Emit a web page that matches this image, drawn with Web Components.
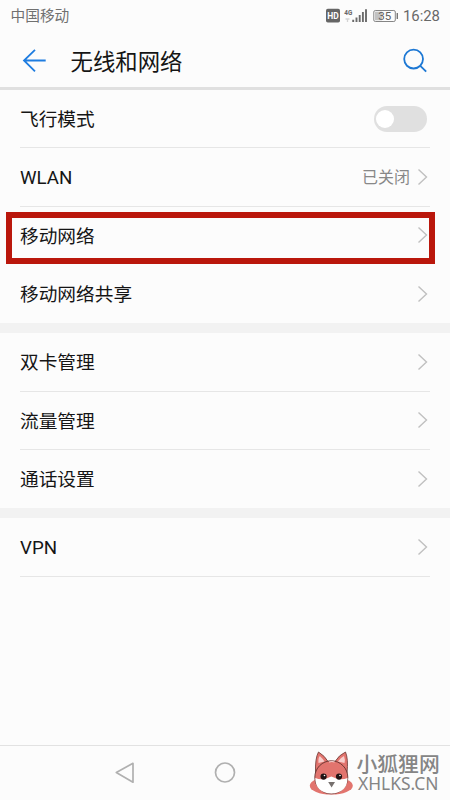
<!DOCTYPE html>
<html lang="zh-CN">
<head>
<meta charset="utf-8">
<title>无线和网络</title>
<style>
html,body{margin:0;height:100%;overflow:hidden}
body{background:#fcfcfc;color:#151515;font-family:Roboto,"Noto Sans CJK SC",sans-serif}
</style>
</head>
<body>
<settings-screen></settings-screen>
<script>
function define(name, html) {
  const t = document.createElement('template');
  t.innerHTML = html;
  customElements.define(name, class extends HTMLElement {
    constructor() {
      super();
      this.attachShadow({mode: 'open'}).append(t.content.cloneNode(true));
    }
  });
}

define('status-bar', `
<style>
:host{display:flex;height:34px;box-sizing:border-box;padding:0 10px 2px 10.5px;align-items:center;color:#707070;font-size:14.7px;line-height:20px}
.carrier{flex:1}
svg{display:block}
.time{margin-left:5px;color:#686868;font-size:14.9px}
</style>
<span class="carrier">中国移动</span>
<svg width="73" height="20" viewBox="325 5 73 20">
  <rect x="326" y="7.8" width="14" height="13.8" rx="1.8" fill="#666"/>
  <text x="327.3" y="18" font-family="Roboto" font-size="9" font-weight="700" fill="#fff" textLength="11.5" lengthAdjust="spacingAndGlyphs">HD</text>
  <text x="344.3" y="13.6" font-family="Roboto" font-size="7.5" font-weight="700" fill="#666" textLength="8" lengthAdjust="spacingAndGlyphs">4G</text>
  <path d="M345.5 18h4M347.5 18v3" stroke="#d4d4d4" stroke-width="1.3"/>
  <path d="M353.2 18.8V21M356.5 16.5V21M359.7 14V21M362.9 11V21M366 8.3V21" stroke="#6b6b6b" stroke-width="1.9"/>
  <rect x="373.8" y="9.5" width="21.5" height="11" rx="1.5" fill="none" stroke="#858585"/>
  <rect x="375" y="10.7" width="7" height="8.6" fill="#c2c2c2"/>
  <path d="M397.3 12v6" stroke="#777" stroke-width="1.4"/>
  <text x="378.2" y="19" font-family="Roboto" font-size="11.5" fill="#606060" textLength="13" lengthAdjust="spacingAndGlyphs">35</text>
</svg>
<span class="time">16:28</span>`);

define('title-bar', `
<style>
:host{display:flex;height:56px;box-sizing:border-box;border-bottom:3px solid #e0e0e0;padding:0 22px 0 22px;align-items:center}
h1{flex:1;margin:0 0 0 23.5px;padding-top:2px;font-size:22.4px;line-height:30px;font-weight:400}
svg{display:block}
</style>
<svg width="25" height="26" viewBox="0 0 25 26" fill="none" stroke="#1f7de0" stroke-width="1.8"><path d="M23.7 12.5H2M13 1.8L2 12.5L13 23.4"/></svg>
<h1><slot></slot></h1>
<svg width="26" height="26" viewBox="0 0 26 26" fill="none" stroke="#1d78d4" stroke-width="1.8"><circle cx="11.6" cy="11.1" r="9.4"/><path d="M18.3 17.8L24.2 23.7"/></svg>`);

define('toggle-switch', `
<style>
:host{display:block;width:53px;height:26px;box-sizing:border-box;border-radius:13px;background:#e0e0e0;padding:4px 2.5px;margin-right:3.5px}
i{display:block;width:18px;height:18px;border-radius:50%;background:#fff}
</style><i></i>`);

define('row-chevron', `
<style>:host{display:block;margin-right:1.5px}svg{display:block}</style>
<svg width="12" height="18" viewBox="0 0 12 18" fill="none" stroke="#c0c0c0" stroke-width="1.4"><path d="M1.5 1.5L9.5 9L1.5 16.5"/></svg>`);

define('settings-row', `
<style>
:host{display:flex;position:relative;height:58.33px;box-sizing:border-box;margin:0 20px;border-bottom:1px solid #e6e6e6;align-items:center;font-size:18.7px;line-height:28px}
:host(.last){border-color:transparent}
.label{flex:1;padding-top:3px}
.value{font-size:16px;color:#888;margin-right:6.5px;padding-top:3px}
:host(.marked)::after{content:"";position:absolute;left:-14px;top:5.3px;width:428.5px;height:52px;box-sizing:border-box;border:6.5px solid #ba170c}
:host(.marked){border-color:transparent}
</style>
<span class="label"><slot></slot></span><span class="value"><slot name="value"></slot></span><slot name="end"><row-chevron></row-chevron></slot>`);

define('settings-group', `
<style>
:host{display:block;border-bottom:10px solid #f2f2f2}
:host(.end){border:0}
</style><slot></slot>`);

define('nav-bar', `
<style>
:host{display:flex;height:55px;box-sizing:border-box;border-top:1px solid #e2e2e2;padding-left:114px;align-items:center}
svg{display:block}
.back{margin-right:78px}
fox-watermark{margin-left:71px}
</style>
<svg class="back" width="22" height="22" viewBox="0 0 22 22" fill="none" stroke="#b0b0b0" stroke-width="1.7" stroke-linejoin="round"><path d="M2.3 10.5L19 1.3V20.2Z"/></svg>
<svg width="22" height="22" viewBox="0 0 22 22" fill="none" stroke="#b0b0b0" stroke-width="1.7"><circle cx="11" cy="10.5" r="9.5"/></svg>
<fox-watermark></fox-watermark>`);

define('fox-watermark', `
<style>
:host{display:flex;align-items:center;color:#858585}
svg{display:block}
.words{margin-left:1.5px;width:84px;white-space:nowrap}
.cn{font:500 20.8px/20px "Noto Sans CJK SC",sans-serif}
.en{font:400 17.4px/20px "Noto Sans",sans-serif;padding-left:1.5px}
</style>
<svg width="48" height="50" viewBox="308 748 48 50">
  <ellipse cx="332.3" cy="785.8" rx="21.5" ry="8.8" fill="#e2746e"/>
  <path d="M316.5 773Q316 758 319.5 752Q326 756 329 761.5H336Q340 755 346.5 752Q349.5 759 348 773Z" fill="#e2746e" stroke="#6b3835" stroke-width=".8"/>
  <path d="M319.5 763Q319 758 320.8 756Q324 759 325.5 761.5M339 761.5Q341 758 345 756Q346.5 760 345.5 763" fill="#f8cecc"/>
  <circle cx="332.3" cy="777.3" r="16.5" fill="#e2746e" stroke="#62332f" stroke-width=".9"/>
  <path d="M316.3 778Q324 781 332.3 776.5Q341 781 348.5 778Q348.3 793 332.3 793.5Q316.5 793 316.3 778Z" fill="#fff"/>
  <path d="M330 762Q333 761 335.5 762" stroke="#f7d9d7" stroke-width="1" fill="none"/>
  <g fill="#211313"><circle cx="324.6" cy="776.6" r="3.1"/><circle cx="340" cy="776.6" r="3.1"/></g>
  <g fill="#fff"><circle cx="325.5" cy="775.5" r=".8"/><circle cx="341" cy="775.5" r=".8"/></g>
  <path d="M329.2 782H336L332.6 787.5Z" fill="#76706e"/>
</svg>
<div class="words"><div class="cn">小狐狸网</div><div class="en">XHLKS.CN</div></div>`);

define('settings-screen', `
<style>
:host{display:flex;flex-direction:column;width:450px;height:800px;overflow:hidden}
main{flex:1}
</style>
<status-bar></status-bar>
<title-bar>无线和网络</title-bar>
<main>
<settings-group>
<settings-row>飞行模式<toggle-switch slot="end"></toggle-switch></settings-row>
<settings-row>WLAN<span slot="value">已关闭</span></settings-row>
<settings-row class="marked">移动网络</settings-row>
<settings-row class="last">移动网络共享</settings-row>
</settings-group>
<settings-group>
<settings-row>双卡管理</settings-row>
<settings-row>流量管理</settings-row>
<settings-row class="last">通话设置</settings-row>
</settings-group>
<settings-group class="end">
<settings-row>VPN</settings-row>
</settings-group>
</main>
<nav-bar></nav-bar>`);
</script>
</body>
</html>
